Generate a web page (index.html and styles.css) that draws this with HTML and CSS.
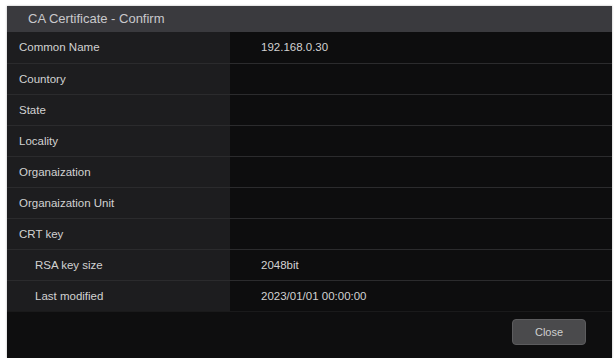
FILE: index.html
```html
<!DOCTYPE html>
<html lang="en">
<head>
    <meta charset="UTF-8">
    <title>CA Certificate - Confirm</title>
    <link rel="stylesheet" href="styles.css">
</head>
<body>

    <!-- dialog -->
    <div class="dialog">
        <div class="dialog-title">CA Certificate - Confirm</div>

        <table class="info">
            <tr><th>Common Name</th><td>192.168.0.30</td></tr>
            <tr><th>Countory</th><td></td></tr>
            <tr><th>State</th><td></td></tr>
            <tr><th>Locality</th><td></td></tr>
            <tr><th>Organaization</th><td></td></tr>
            <tr><th>Organaization Unit</th><td></td></tr>
            <tr><th>CRT key</th><td></td></tr>
            <tr><th class="sub">RSA key size</th><td>2048bit</td></tr>
            <tr><th class="sub">Last modified</th><td>2023/01/01 00:00:00</td></tr>
        </table>

        <div class="dialog-footer">
            <button class="btn">Close</button>
        </div>
    </div>

</body>
</html>
```

FILE: styles.css
```css
/* page */
body {
    margin: 0;
    background: #fff;
    font-family: 'Liberation Sans', Arial, sans-serif;
}

.dialog {
    margin: 6px 0 0 7px;
    width: 605px;
    height: 352px;
    background: #0e0e0f;
    display: flex;
    flex-direction: column;
    box-shadow: 0 0 2px rgba(0, 0, 0, 0.3);
}

.dialog-title {
    height: 26px;
    line-height: 26px;
    padding-left: 21px;
    background: #3a3a3e;
    color: #c9c9cc;
    font-size: 13px;
}

/* rows */
.info {
    border-collapse: collapse;
    table-layout: fixed;
    width: 100%;
}

.info tr {
    height: 31px;
}

.info th,
.info td {
    padding: 0;
    font-size: 11.5px;
    font-weight: normal;
    text-align: left;
    color: #d2d2d2;
    border-bottom: 1px solid #2b2b2d;
}

.info th {
    width: 211px;
    padding-left: 12px;
    background: #1d1d1f;
}

.info th.sub {
    padding-left: 28px;
}

.info td {
    padding-left: 31px;
    background: #0d0d0e;
}

.info tr:last-child th,
.info tr:last-child td {
    border-bottom: 1px solid #1a1a1b;
}

/* footer */
.dialog-footer {
    flex: 1;
    display: flex;
    justify-content: flex-end;
    align-items: flex-start;
    padding: 7px 26px 0 0;
    background: #0e0e0f;
}

.btn {
    width: 74px;
    height: 26px;
    font-family: inherit;
    font-size: 11px;
    color: #cfcfcf;
    background: #4a4a4c;
    border: 1px solid #5c5c5e;
    border-radius: 4px;
}
```
